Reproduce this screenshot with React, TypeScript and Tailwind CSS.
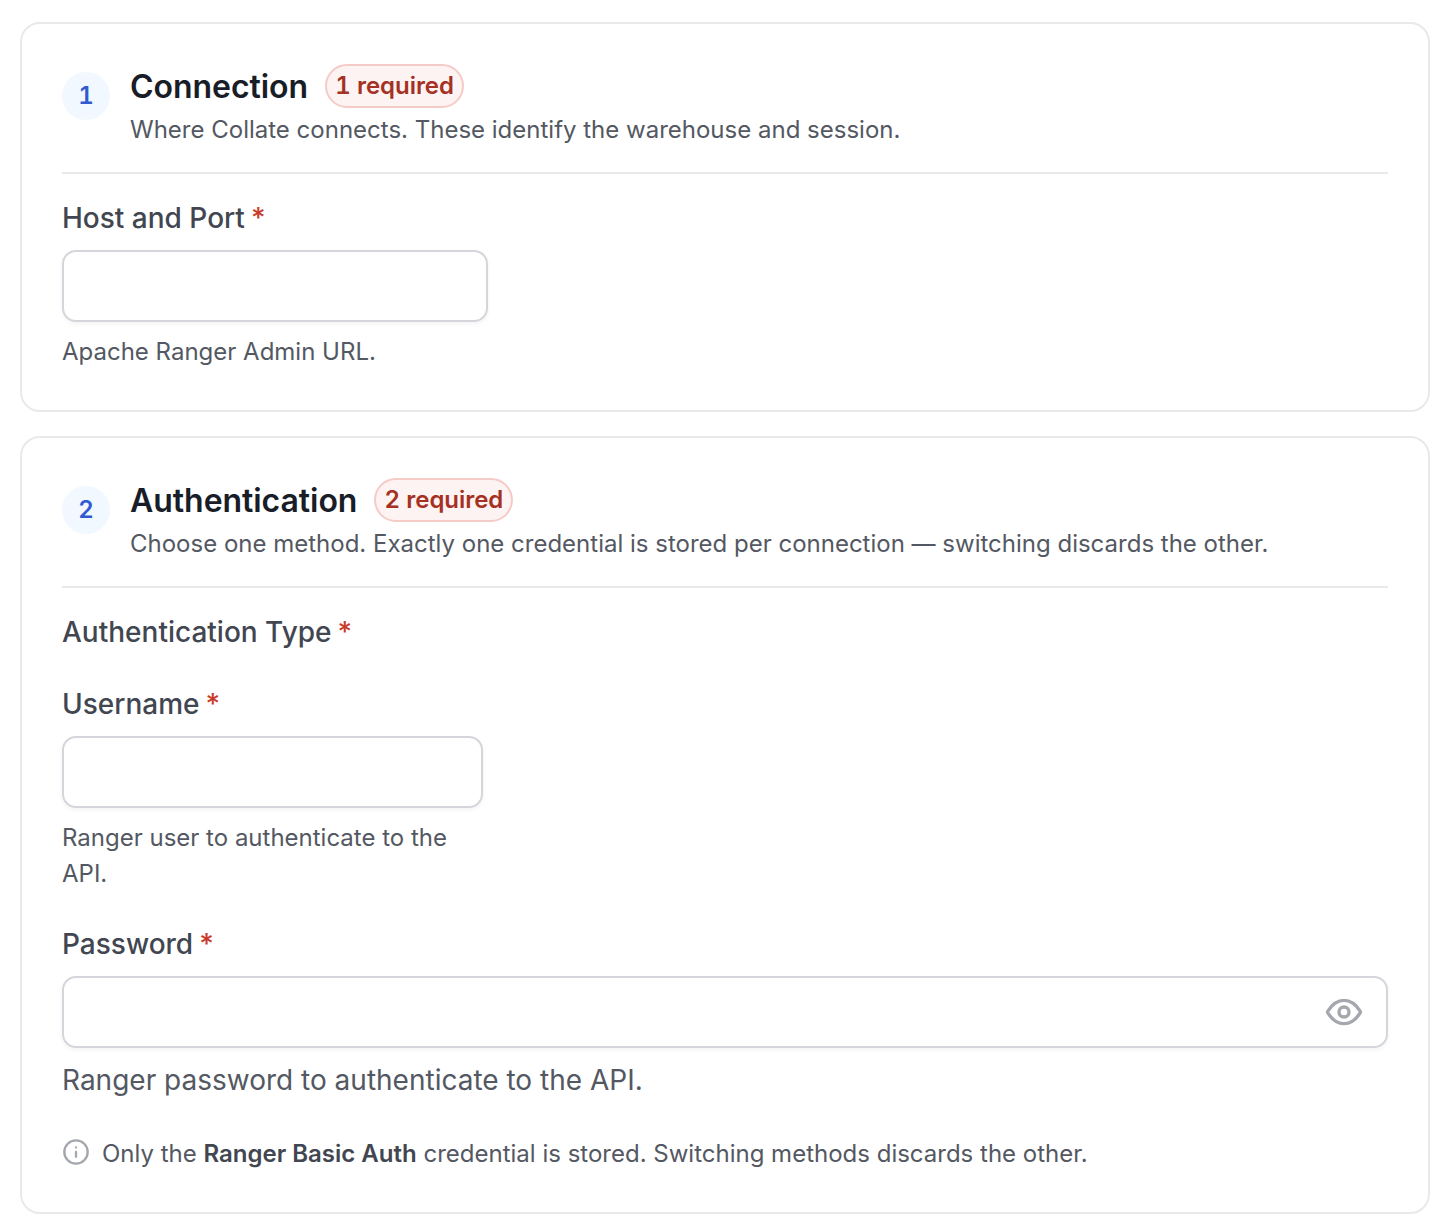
import type { ReactNode } from "react";

type SectionProps = {
  step: number;
  title: string;
  badge: string;
  description: string;
  children: ReactNode;
};

const Section = ({ step, title, badge, description, children }: SectionProps) => (
  <section className="rounded-[20px] border-2 border-[#e9e9eb] bg-white px-10 pt-10 pb-10">
    <header className="flex items-start gap-5 border-b-2 border-[#e9e9eb] pb-6">
      <span className="mt-2 grid size-12 shrink-0 place-items-center rounded-full bg-[#f1f8ff] text-[24px] leading-9 font-semibold text-[#2f5bcf] tabular-nums">
        {step}
      </span>
      <div>
        <div className="flex h-11 items-center gap-[17px]">
          <h2 className="pt-0.5 text-[32px] leading-[44px] font-semibold tracking-[-0.05px] text-[#181d27]">
            {title}
          </h2>
          <span className="flex h-11 w-[139px] items-center justify-center rounded-full border-2 border-[#f5cbc8] bg-[#fdf3f2] text-[24px] leading-9 font-semibold tracking-[-0.05px] text-[#a53024] tabular-nums">
            {badge}
          </span>
        </div>
        <p className="mt-1 text-[24px] leading-9 text-[#535862]">{description}</p>
      </div>
    </header>
    {children}
  </section>
);

const Label = ({ children }: { children: ReactNode }) => (
  <div className="text-[28px] leading-10 font-medium text-[#414651]">
    {children}
    <span className="ml-1.5 text-[#ca3a2b]">*</span>
  </div>
);

const inputClass =
  "block h-[72px] w-full rounded-[14px] border-2 border-[#d5d6db] bg-white px-5 text-[28px] shadow-[0_2px_4px_rgba(10,13,18,0.05)] outline-none";

export default function App() {
  return (
    <main className="flex h-[1232px] w-[1450px] flex-col gap-6 bg-white px-5 pt-[22px] font-['Inter',sans-serif]">
      <Section
        step={1}
        title="Connection"
        badge="1 required"
        description="Where Collate connects. These identify the warehouse and session."
      >
        <div className="w-[426px] pt-6">
          <Label>Host and Port</Label>
          <input className={`${inputClass} mt-3`} />
          <p className="mt-3 text-[24px] leading-9 text-[#535862]">
            Apache Ranger Admin URL.
          </p>
        </div>
      </Section>

      <Section
        step={2}
        title="Authentication"
        badge="2 required"
        description="Choose one method. Exactly one credential is stored per connection — switching discards the other."
      >
        <div className="pt-6">
          <Label>Authentication Type</Label>
          <div className="mt-8 w-[421px]">
            <Label>Username</Label>
            <input className={`${inputClass} mt-3`} />
            <p className="mt-3 text-[24px] leading-9 text-[#535862]">
              Ranger user to authenticate to the API.
            </p>
          </div>
          <div className="mt-8">
            <Label>Password</Label>
            <div className="relative mt-3">
              <input type="password" className={inputClass} />
              <svg
                className="absolute top-4 right-6 size-10"
                viewBox="0 0 24 24"
                fill="none"
                stroke="#a4a7ae"
                strokeWidth="2"
                strokeLinecap="round"
                strokeLinejoin="round"
              >
                <path d="M2.42 12.713c-.136-.215-.204-.323-.242-.49a1.173 1.173 0 0 1 0-.446c.038-.167.106-.274.242-.49C3.546 9.505 6.895 5 12 5s8.455 4.505 9.58 6.287c.137.215.205.323.243.49.029.125.029.322 0 .446-.038.167-.106.274-.242.49C20.455 14.495 17.105 19 12 19c-5.106 0-8.455-4.505-9.58-6.287Z" />
                <circle cx="12" cy="12" r="3" />
              </svg>
            </div>
            <p className="mt-3 text-[28px] leading-10 text-[#535862]">
              Ranger password to authenticate to the API.
            </p>
          </div>
          <div className="mt-9 flex items-start gap-3">
            <svg
              className="mt-0.5 size-7"
              viewBox="0 0 24 24"
              fill="none"
              stroke="#a4a7ae"
              strokeWidth="2"
              strokeLinecap="round"
              strokeLinejoin="round"
            >
              <path d="M12 16v-4m0-4h.01M22 12c0 5.523-4.477 10-10 10S2 17.523 2 12 6.477 2 12 2s10 4.477 10 10Z" />
            </svg>
            <p className="text-[24px] leading-9 text-[#535862]">
              Only the{" "}
              <strong className="font-semibold text-[#414651]">Ranger Basic Auth</strong>{" "}
              credential is stored. Switching methods discards the other.
            </p>
          </div>
        </div>
      </Section>
    </main>
  );
}
